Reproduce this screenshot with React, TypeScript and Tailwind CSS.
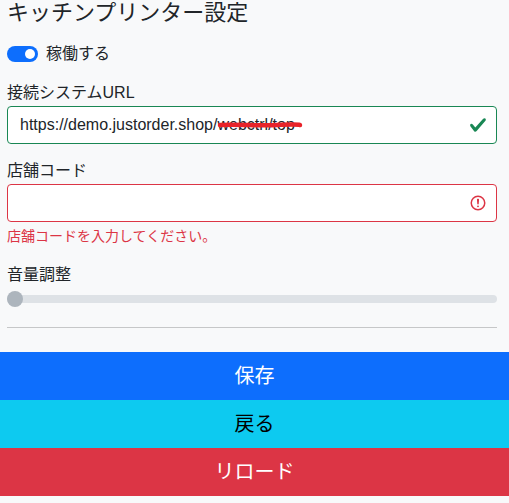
import React from 'react'

const jp = { fontFamily: '"Liberation Sans", "Noto Sans CJK JP", sans-serif' }

const ValidIcon = () => (
  <svg viewBox="0 0 8 8" className="w-[18px] h-[18px]">
    <path
      fill="#198754"
      d="M2.3 6.73.6 4.53c-.4-1.04.46-1.4 1.1-.8l1.1 1.4 3.4-3.8c.6-.63 1.6-.27 1.2.7l-4 4.6c-.43.5-.8.4-1.1.1z"
    />
  </svg>
)

const InvalidIcon = () => (
  <svg viewBox="0 0 12 12" className="w-[18px] h-[18px]" fill="none" stroke="#dc3545">
    <circle cx="6" cy="6" r="4.5" />
    <path strokeLinejoin="round" d="M5.8 3.6h.4L6 6.5z" />
    <circle cx="6" cy="8.2" r=".6" fill="#dc3545" stroke="none" />
  </svg>
)

export default function App() {
  return (
    <div className="min-h-[503px] bg-[#f8f9fa] text-[#212529]" style={jp}>
      <div className="pl-[7px] pr-[12px]">
        {/* Title */}
        <h4 className="text-[22px] leading-[26px] font-normal">キッチンプリンター設定</h4>

        {/* Switch */}
        <div className="mt-[16px] h-[24px] flex items-center gap-[8px]">
          <div className="w-[31px] h-[16px] rounded-full bg-[#0d6efd] flex items-center justify-end px-[3px]">
            <div className="w-[10px] h-[10px] rounded-full bg-white" />
          </div>
          <span className="text-[16px]">稼働する</span>
        </div>

        {/* URL */}
        <div className="mt-[15px] text-[16px] leading-[24px]">接続システムURL</div>
        <div className="relative mt-[1px] h-[38px] rounded-[4px] border border-[#198754] bg-white flex items-center pl-[12px] pr-[9px]">
          <span className="flex-1 text-[16px] text-[#212529]">https://demo.justorder.shop/webctrl/top</span>
          <ValidIcon />
          <svg className="absolute left-[209px] top-[14px] w-[86px] h-[8px]" viewBox="0 0 86 8">
            <path
              d="M3 4 C 20 3, 40 5, 60 4 S 78 3, 83 4"
              stroke="#e8232a"
              strokeWidth="4.5"
              strokeLinecap="round"
              fill="none"
            />
          </svg>
        </div>

        {/* Store code */}
        <div className="mt-[15px] text-[16px] leading-[24px]">店舗コード</div>
        <div className="mt-[1px] h-[38px] rounded-[4px] border border-[#dc3545] bg-white flex items-center justify-end pr-[9px]">
          <InvalidIcon />
        </div>
        <div className="mt-[4px] text-[14px] leading-[21px] text-[#dc3545]">店舗コードを入力してください。</div>

        {/* Volume */}
        <div className="mt-[16px] text-[16px] leading-[24px]">音量調整</div>
        <div className="h-[24px] flex items-center">
          <div className="relative w-full h-[8px] rounded-full bg-[#dee2e6]">
            <div className="absolute left-0 top-[-4px] w-[16px] h-[16px] rounded-full bg-[#adb5bd]" />
          </div>
        </div>

        <hr className="mt-[16px] border-0 border-t border-[#c6c7c8]" />
      </div>

      {/* Buttons */}
      <div className="mt-[24px] flex flex-col">
        <button className="h-[48px] bg-[#0d6efd] text-white text-[20px]">保存</button>
        <button className="h-[48px] bg-[#0dcaf0] text-black text-[20px]">戻る</button>
        <button className="h-[48px] bg-[#dc3545] text-white text-[20px]">リロード</button>
      </div>
    </div>
  )
}
